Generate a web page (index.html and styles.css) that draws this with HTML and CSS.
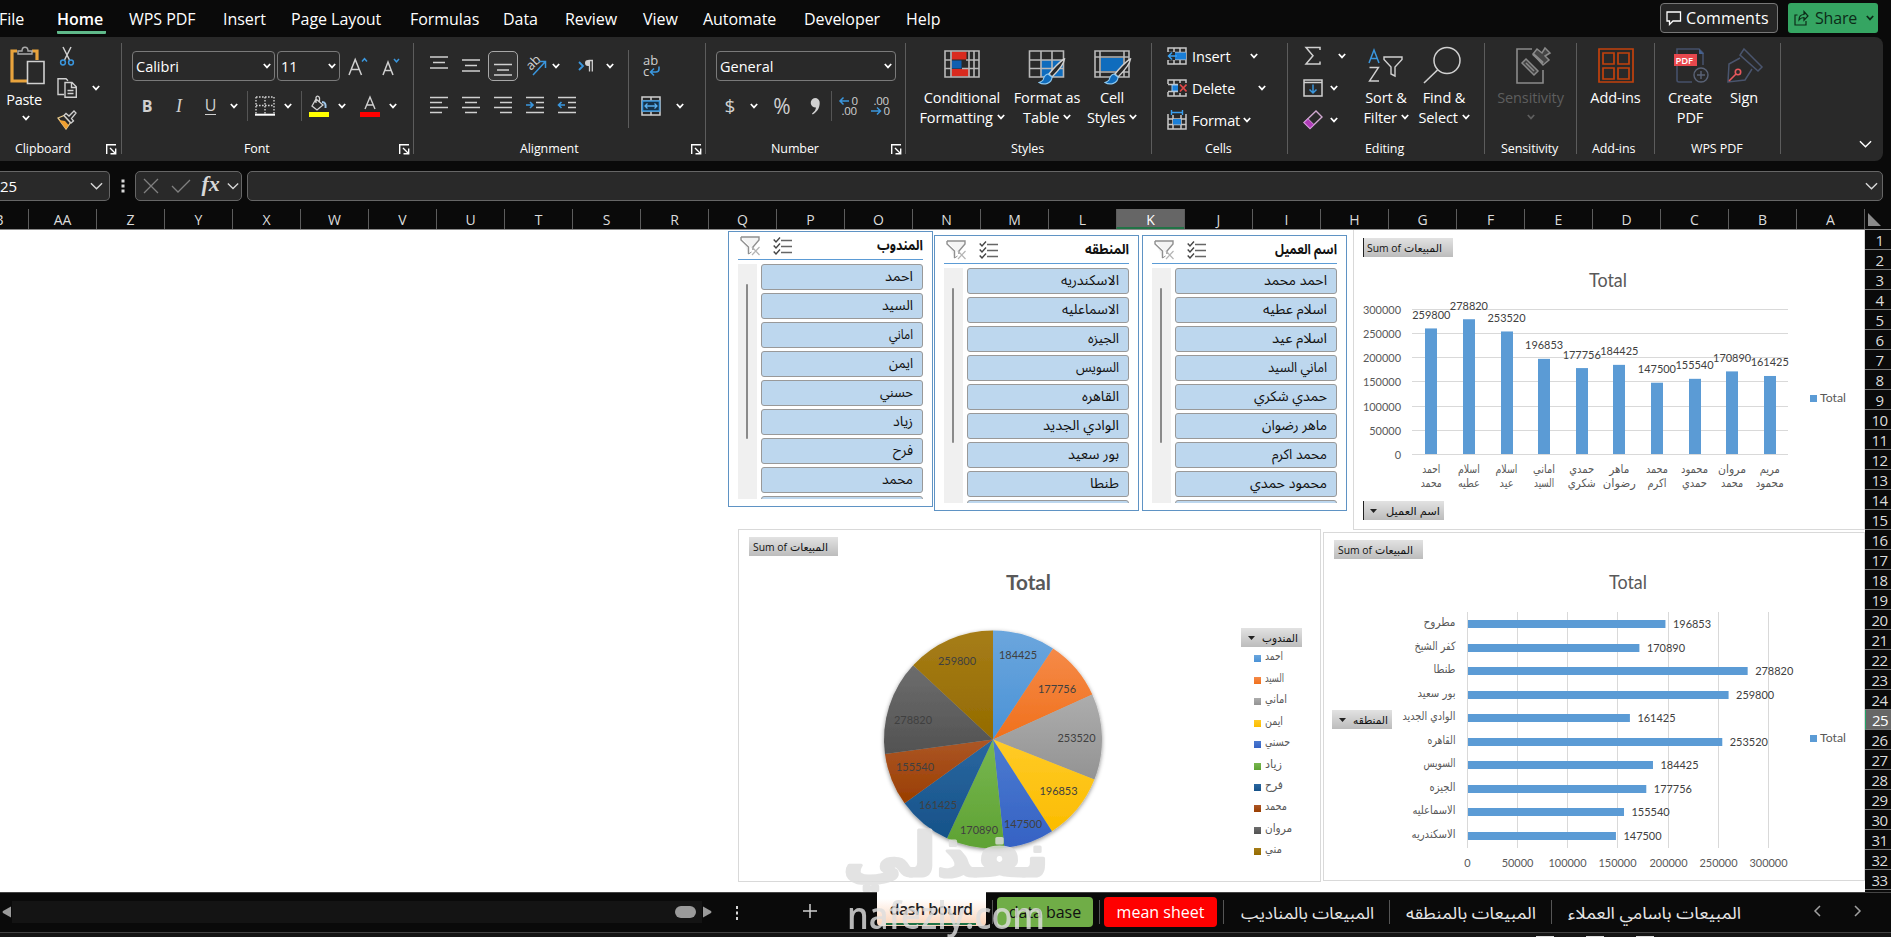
FILE: index.html
```html
<!DOCTYPE html>
<html lang="en">
<head>
<meta charset="utf-8">
<title>dash bourd</title>
<link rel="stylesheet" href="styles.css">
</head>
<body>
<svg class="defs" aria-hidden="true">
  <symbol id="chev" viewBox="0 0 8 6"><path d="M.8 1 4 4.4 7.2 1" fill="none" stroke="currentColor" stroke-width="1.7"/></symbol>
  <symbol id="chev-lg" viewBox="0 0 14 8"><path d="M1 1l6 6 6-6" fill="none" stroke="currentColor" stroke-width="1.5"/></symbol>
  <symbol id="launch" viewBox="0 0 11 11"><path d="M.7 10V.7H10M4 4l5 5M9.7 4.5v5.3H4.5" fill="none" stroke="currentColor" stroke-width="1.4"/></symbol>
  <symbol id="brush" viewBox="0 0 28 27"><path d="M26.5 1C22 3 14 12 11 16l3 3C18 15 26 6 26.500 1z" fill="#292929" stroke="#d0d0d0" stroke-width="1.400"/><path d="M10 16c-4 .5-4 4-5 6-1 1.500-2.500 2-4 2.500 5 3 13 1 13-5.500z" fill="#0f6cbd" stroke="#8cc8f0" stroke-width="1.200"/></symbol>
  <symbol id="clear-filter" viewBox="0 0 20 20"><path d="M1 1h18v3l-6 7v3M8.500 18V11L1 4V1" fill="#f4f4f4" stroke="#8f8f8f" stroke-width="1.400"/><path d="M8.500 18l3-2" stroke="#8f8f8f"/><path d="M12 11l7.500 8m0-8L12 19" stroke="#b4b4b4" stroke-width="1.200"/></symbol>
  <symbol id="multi" viewBox="0 0 19 18"><path d="M8 3.500h11M8 9.500h11M8 15.500h11" stroke="#666" stroke-width="1.500"/><path d="M.7 2.500l2.300 2.500 4-4.500M.7 8.500l2.300 2.500 4-4.500M.7 14.500l2.300 2.500 4-4.500" fill="none" stroke="#444" stroke-width="1.400"/></symbol>
</svg>

<nav class="menu">
  <span class="tab t-file">File</span><span class="tab t-home"><b>Home</b></span><span class="tab t-wps">WPS PDF</span><span class="tab t-insert">Insert</span><span class="tab t-page">Page Layout</span><span class="tab t-form">Formulas</span><span class="tab t-data">Data</span><span class="tab t-review">Review</span><span class="tab t-view">View</span><span class="tab t-auto">Automate</span><span class="tab t-dev">Developer</span><span class="tab">Help</span>
  <span class="menu-end">
    <button class="comments"><svg width="16" height="15" viewBox="0 0 16 15"><path d="M1 1h13.500v9H7l-3.500 3.500V10H1z" fill="none" stroke="#fff" stroke-width="1.300"/></svg>Comments</button>
    <button class="share"><svg width="15" height="16" viewBox="0 0 15 16"><path d="M3.500 5H1v10h11v-4M5 10c0-4 2-5.500 5-5.500V1.500L14 6l-4 4.200V7.500C8 7.500 6.500 8 5 10z" fill="none" stroke="#0c2b18" stroke-width="1.200"/></svg>Share<svg class="chev"><use href="#chev"/></svg></button>
  </span>
</nav>

<section class="ribbon">
  <div class="group g-clip">
    <div class="body clip">
      <div class="paste">
        <svg width="36" height="40" viewBox="0 0 36 40"><path d="M7 5H2v30h16M22 5h5v9" fill="none" stroke="#e8a33d" stroke-width="3.200"/><path d="M8 8V5h4c0-5 6-5 6 0h4v3z" fill="#292929" stroke="#aaa" stroke-width="1.400"/><path d="M17.500 15.500H34v22H17.500z" fill="#292929" stroke="#d0d0d0" stroke-width="1.600"/></svg>
        <span>Paste</span><svg class="chev"><use href="#chev"/></svg>
      </div>
      <div class="clip-tools">
        <svg width="20" height="20" viewBox="0 0 20 20"><path d="M6 1l6.500 13M14 1L7.500 14" stroke="#d0d0d0" stroke-width="1.500"/><circle cx="6" cy="16.500" r="2.400" fill="none" stroke="#3a96dd" stroke-width="1.500"/><circle cx="14" cy="16.500" r="2.400" fill="none" stroke="#3a96dd" stroke-width="1.500"/></svg><i></i>
        <svg width="20" height="20" viewBox="0 0 20 20"><path d="M7 16.500H1V.800h8l2 2" fill="none" stroke="#d0d0d0" stroke-width="1.400"/><path d="M8 4.500h7l4.300 4.300v10.400H8zM14.500 4.500v5h5M10.500 12.500h6M10.500 15.500h6" fill="none" stroke="#d0d0d0" stroke-width="1.400"/></svg><svg class="chev"><use href="#chev"/></svg>
        <svg width="20" height="20" viewBox="0 0 20 20"><path d="M1 8l6-2.500 6.500 7L9 19z" fill="#292929" stroke="#e8c98a" stroke-width="1.300"/><path d="M2 10l6 1 3.500 4L9 19z" fill="#f0a030"/><path d="M7 5.500l2-2 3 2.500L17 1l2 2-4.500 5.500 2 2.500-2.500 2z" fill="#292929" stroke="#d0d0d0" stroke-width="1.300"/></svg><i></i>
      </div>
    </div>
    <div class="label l-clip">Clipboard<svg class="launch"><use href="#launch"/></svg></div>
  </div>

  <div class="group g-font">
    <div class="body stack">
      <div class="row r-font1">
        <div class="combo">Calibri<svg class="chev"><use href="#chev"/></svg></div><i></i>
        <div class="combo">11<svg class="chev"><use href="#chev"/></svg></div>
        <svg width="20" height="20" viewBox="0 0 20 20"><path d="M1 19L7.200 3.500 13.500 19M3.300 13.500h8" fill="none" stroke="#d0d0d0" stroke-width="1.500"/><path d="M14 5.500l2.500-2.800L19 5.500" fill="none" stroke="#3a96dd" stroke-width="1.500"/></svg>
        <svg width="18" height="20" viewBox="0 0 18 20"><path d="M1 19L6 6l5 13M2.800 14.500h6.500" fill="none" stroke="#d0d0d0" stroke-width="1.500"/><path d="M12 3l2.500 2.800L17 3" fill="none" stroke="#3a96dd" stroke-width="1.500"/></svg>
      </div>
      <div class="row r-font2">
        <span class="gl bold">B</span><span class="gl ital">I</span><span class="gl under">U</span><svg class="chev"><use href="#chev"/></svg><i class="sep"></i>
        <svg width="20" height="20" viewBox="0 0 20 20"><path d="M1 1h18v17M1 1v17M10 1v17M1 9.500h18" fill="none" stroke="#d0d0d0" stroke-width="1.400" stroke-dasharray="1.600 1.400"/><path d="M0 18.700h20" stroke="#fff" stroke-width="2"/></svg>
        <svg class="chev"><use href="#chev"/></svg><i class="sep"></i>
        <svg width="20" height="22" viewBox="0 0 20 22"><path d="M7 4l7 6-6 5-5-4zM7 8V2.500C7.500.500 10 .500 10.500 3v4" fill="none" stroke="#d0d0d0" stroke-width="1.300"/><path d="M13 7c3 0 4 2 3.500 6" fill="none" stroke="#9fc6e8" stroke-width="2"/><path d="M0 17h20v5H0z" fill="#ff0"/></svg>
        <svg class="chev"><use href="#chev"/></svg>
        <svg width="20" height="22" viewBox="0 0 20 22"><path d="M5 14L10 2l5 12M6.800 10h6.500" fill="none" stroke="#d0d0d0" stroke-width="1.400"/><path d="M0 17h20v5H0z" fill="#f00"/></svg>
        <svg class="chev"><use href="#chev"/></svg>
      </div>
    </div>
    <div class="label l-font">Font<svg class="launch"><use href="#launch"/></svg></div>
  </div>

  <div class="group g-align">
    <div class="body align">
      <div class="stack">
        <div class="row r-al1">
          <svg class="ln" viewBox="0 0 20 20"><path d="M1 1h18M4 6.500h12M1 12h18"/></svg>
          <svg class="ln" viewBox="0 0 20 20"><path d="M1 4h18M4 9.500h12M1 15h18"/></svg>
          <span class="pressed"><svg class="ln" viewBox="0 0 20 20"><path d="M1 8.500h18M4 14h12M1 19h18"/></svg></span>
          <svg width="22" height="22" viewBox="0 0 22 22"><text class="ab" transform="translate(6 16) rotate(-45)">ab</text><path d="M8 20L20 7M14 6.500h6.500V13" fill="none" stroke="#3a96dd" stroke-width="1.500"/></svg>
          <svg class="chev"><use href="#chev"/></svg><i></i>
          <svg width="18" height="16" viewBox="0 0 18 16"><path d="M2 4l4 4-4 4" fill="none" stroke="#3a96dd" stroke-width="1.800"/><path d="M16 2.500h-4.500M12.500 2.500v11M15.300 2.500v11" stroke="#d0d0d0" stroke-width="1.300"/><path d="M12.500 2H11a3 3 0 0 0 0 6h1.500z" fill="#d0d0d0"/></svg>
          <svg class="chev"><use href="#chev"/></svg>
        </div>
        <div class="row r-al2">
          <svg class="ln" viewBox="0 0 20 20"><path d="M1 1.500h18M1 6.500h12M1 11.500h18M1 16.500h12"/></svg>
          <svg class="ln" viewBox="0 0 20 20"><path d="M1 1.500h18M4 6.500h12M1 11.500h18M4 16.500h12"/></svg>
          <svg class="ln" viewBox="0 0 20 20"><path d="M1 1.500h18M7 6.500h12M1 11.500h18M7 16.500h12"/></svg>
          <svg class="ln" viewBox="0 0 20 20"><path d="M1 1.500h18M11 6.500h8M11 11.500h8M1 16.500h18"/><path class="bl" d="M1 9h7M5 6l3 3-3 3"/></svg>
          <svg class="ln" viewBox="0 0 20 20"><path d="M1 1.500h18M11 6.500h8M11 11.500h8M1 16.500h18"/><path class="bl" d="M8 9H1.500M4.500 6l-3 3 3 3"/></svg>
        </div>
      </div>
      <i class="vsep"></i>
      <div class="wrap">
        <svg width="20" height="22" viewBox="0 0 20 22"><text class="ab2" x="2" y="10">ab</text><text class="ab2" x="2" y="20.500">c</text><path d="M18 11.500v2.500a3 3 0 0 1-3 3h-5M13 13.500L9.500 17l3.500 3.500" fill="none" stroke="#3a96dd" stroke-width="1.600"/></svg><i></i>
        <svg width="20" height="20" viewBox="0 0 20 20"><path d="M1 1h18v18H1zM1 5h18M1 15h18M10 1v4M10 15v4" fill="none" stroke="#d0d0d0" stroke-width="1.500"/><path d="M1.500 5h17v10h-17z" fill="#16324a" stroke="#3a96dd" stroke-width="1.500"/><path d="M4 10h12M6.500 7.500L4 10l2.500 2.500M13.500 7.500L16 10l-2.500 2.500" fill="none" stroke="#5ab0f0" stroke-width="1.300"/></svg>
        <svg class="chev"><use href="#chev"/></svg>
      </div>
    </div>
    <div class="label l-align">Alignment<svg class="launch"><use href="#launch"/></svg></div>
  </div>

  <div class="group g-num">
    <div class="body stack">
      <div class="row r-num1"><div class="combo">General<svg class="chev"><use href="#chev"/></svg></div></div>
      <div class="row r-num2">
        <span class="gl dollar">$</span><svg class="chev"><use href="#chev"/></svg><span class="gl pct">%</span>
        <svg width="10" height="17" viewBox="0 0 10 17"><path d="M5 0a4.700 4.700 0 0 1 4.700 5c0 5-2.500 9-7 11.500l-.7-1c2.500-1.800 3.800-3.800 4-6A4.700 4.700 0 1 1 5 0z" fill="#d0d0d0"/></svg><i class="sep"></i>
        <svg width="20" height="22" viewBox="0 0 20 22"><text class="dec" x="12.500" y="10">0</text><text class="dec" x="2.500" y="20">.00</text><path d="M10 6H1M4.500 2.500L1 6l3.500 3.500" fill="none" stroke="#3a96dd" stroke-width="1.500"/></svg>
        <svg width="20" height="22" viewBox="0 0 20 22"><text class="dec" x="2.500" y="10">.00</text><text class="dec" x="12.500" y="20">0</text><path d="M0 16h9.500M6 12.500L9.500 16 6 19.500" fill="none" stroke="#3a96dd" stroke-width="1.500"/></svg>
      </div>
    </div>
    <div class="label l-num">Number<svg class="launch"><use href="#launch"/></svg></div>
  </div>

  <div class="group g-styles">
    <div class="body big r-styles">
      <div class="tool"><svg width="40" height="38" viewBox="0 0 40 38"><path d="M9.500 5.500h15v8h-15zM9.500 23h18v7.500h-18z" fill="#d92b1f"/><path d="M9.500 14.500h10v8h-10z" fill="#0f5fb0"/><path d="M3 5h34v26H3zM3 14h6M24 14h13M3 22.500h6M20 22.500h17M9 5v26M27 5v26M32 5v26" fill="none" stroke="#b8b8b8" stroke-width="1.600"/></svg><span>Conditional</span><span>Formatting <svg class="chev"><use href="#chev"/></svg></span></div>
      <div class="tool"><svg width="40" height="38" viewBox="0 0 40 38"><path d="M14 14h22v17H14z" fill="#0f6cbd"/><path d="M2.500 5h34v26h-34zM2.500 14h34M2.500 22.500h34M14 5v26M25 5v26" fill="none" stroke="#b8b8b8" stroke-width="1.600"/><use href="#brush" x="11" y="12" width="28" height="27"/></svg><span>Format as</span><span>Table <svg class="chev"><use href="#chev"/></svg></span></div>
      <div class="tool"><svg width="40" height="38" viewBox="0 0 40 38"><path d="M3 5h34v26H3zM3 11h34M3 26h34M8 5v26M32 5v26" fill="none" stroke="#b8b8b8" stroke-width="1.600"/><path d="M9 12h22v13H9z" fill="#0f6cbd"/><use href="#brush" x="12" y="12" width="28" height="27"/></svg><span>Cell</span><span>Styles <svg class="chev"><use href="#chev"/></svg></span></div>
    </div>
    <div class="label l-styles">Styles</div>
  </div>

  <div class="group g-cells">
    <div class="body cells">
      <div class="line"><svg width="20" height="18" viewBox="0 0 20 18"><path d="M1 1h18v16H1zM1 5.500h18M1 12.500h18M7 1v16M13 1v16" fill="none" stroke="#c8c8c8" stroke-width="1.500"/><path d="M8 5.500h11v7H8z" fill="#1a7fd8"/><path d="M0 5h8v8H0z" fill="#292929"/><path d="M10 9H1.500M5 5.500L1.500 9 5 12.500" fill="none" stroke="#3aa0f0" stroke-width="1.500"/></svg><span class="c-ins">Insert</span><svg class="chev"><use href="#chev"/></svg></div>
      <div class="line"><svg width="20" height="18" viewBox="0 0 20 18"><path d="M1 5V1h18v4M1 13v4h18v-4M7 1v4M13 1v4M7 13v4M13 13v4M1 5.500h18M1 12.500h18" fill="none" stroke="#c8c8c8" stroke-width="1.500"/><path d="M5 6h7v6H5z" fill="#1a7fd8" stroke="#9cc8ee"/><path d="M11 4h9v10h-9z" fill="#292929"/><path d="M13 5.500l6.500 7m0-7l-6.500 7" stroke="#e04848" stroke-width="1.700"/></svg><span class="c-del">Delete</span><svg class="chev"><use href="#chev"/></svg></div>
      <div class="line"><svg width="20" height="20" viewBox="0 0 20 20"><path d="M1 4v15h18V4M1 9h18M1 14.500h18M6 5v14M14 5v14" fill="none" stroke="#c8c8c8" stroke-width="1.500"/><path d="M6 9h8v5.500H6z" fill="#1a7fd8"/><path d="M4.500 2.500h11M4.500 0v5M15.500 0v5" stroke="#3aa0f0" stroke-width="1.400"/></svg><span class="c-for">Format</span><svg class="chev"><use href="#chev"/></svg></div>
    </div>
    <div class="label l-cells">Cells</div>
  </div>

  <div class="group g-edit">
    <div class="body edit">
      <div class="edit-col">
        <div class="line e1"><svg width="20" height="20" viewBox="0 0 20 20"><path d="M17 4V1.500H3l7 8.300L3 18h14v-2.500" fill="none" stroke="#d0d0d0" stroke-width="1.500"/></svg><svg class="chev"><use href="#chev"/></svg></div>
        <div class="line"><svg width="20" height="18" viewBox="0 0 20 18"><path d="M1 1h18v16H1zM1 3.500h18" fill="none" stroke="#d0d0d0" stroke-width="1.500"/><path d="M10 5.500v8.500M6.500 10.500L10 14l3.500-3.500" fill="none" stroke="#3a96dd" stroke-width="1.500"/></svg><svg class="chev"><use href="#chev"/></svg></div>
        <div class="line"><svg width="20" height="20" viewBox="0 0 20 20"><path d="M1 12.500L13 1l6 6L7 18.500z" fill="none" stroke="#d0a8d0" stroke-width="1.400"/><path d="M1 12.500L5 8.700l6 6L7 18.500z" fill="#b03bb8" stroke="#d79be0"/></svg><svg class="chev"><use href="#chev"/></svg></div>
      </div>
      <div class="big r-edit">
        <div class="tool"><svg width="40" height="38" viewBox="0 0 40 38"><path d="M3 17L8 4l5 13M4.800 12.500h6.500" fill="none" stroke="#3a96dd" stroke-width="1.500"/><path d="M3.500 21.500h9L3.500 35h9.500" fill="none" stroke="#d0d0d0" stroke-width="1.400"/><path d="M18 11h18v2.500l-7 7.500v9l-4-2V21l-7-7.500z" fill="none" stroke="#d0d0d0" stroke-width="1.400"/></svg><span>Sort &amp;</span><span>Filter <svg class="chev"><use href="#chev"/></svg></span></div>
        <div class="tool find"><svg width="40" height="38" viewBox="0 0 40 38"><circle cx="25" cy="14.500" r="13" fill="none" stroke="#d0d0d0" stroke-width="1.500"/><path d="M15.500 24L2 37" stroke="#d0d0d0" stroke-width="1.600"/></svg><span>Find &amp;</span><span>Select <svg class="chev"><use href="#chev"/></svg></span></div>
      </div>
    </div>
    <div class="label l-edit">Editing</div>
  </div>

  <div class="group g-sens">
    <div class="body big one">
      <div class="tool dim"><svg width="40" height="38" viewBox="0 0 40 38"><path d="M21 3H6v34h26V24" fill="none" stroke="#8a8a8a" stroke-width="1.600"/><path d="M11 17l4-4 12 12-4 4zM15 17l8 8M22 8l4-5 5 4 3-5 5 5-5 3 4 4-6 5z" fill="#444" stroke="#8a8a8a" stroke-width="1.500"/><path d="M22 8l10 9" stroke="#8a8a8a" stroke-width="2.500"/></svg><span>Sensitivity</span><span><svg class="chev"><use href="#chev"/></svg></span></div>
    </div>
    <div class="label l-sens">Sensitivity</div>
  </div>

  <div class="group g-add">
    <div class="body big one">
      <div class="tool"><svg width="40" height="38" viewBox="0 0 40 38"><g fill="none" stroke="#c2410c" stroke-width="1.700"><path d="M3 3h34v33H3z"/><path d="M7 7h11v11H7zM22 7h11v11H22zM7 22h11v11H7zM22 22h11v11H22z"/></g></svg><span>Add-ins</span></div>
    </div>
    <div class="label l-add">Add-ins</div>
  </div>

  <div class="group g-wps">
    <div class="body big r-wps">
      <div class="tool"><svg width="40" height="38" viewBox="0 0 40 38"><path d="M7 8V3h22l4 4v12M7 20v14a2 2 0 0 0 2 2h13" fill="none" stroke="#45506a" stroke-width="1.600"/><path d="M29 3v5h5" fill="#45618f"/><path d="M4 8h23v12H4z" fill="#e8484d"/><text class="pdf" x="5.500" y="17.500">PDF</text><circle cx="31" cy="29" r="7" fill="none" stroke="#5a6377" stroke-width="1.400"/><path d="M31 25v8M27 29h8" stroke="#5a6377" stroke-width="1.400"/></svg><span>Create</span><span>PDF</span></div>
      <div class="tool"><svg width="40" height="38" viewBox="0 0 40 38"><path d="M20 3l18 18-4 4L16 9zM16 12L5 18 4 36l17-2 7-11" fill="none" stroke="#4a556e" stroke-width="1.500"/><circle cx="14" cy="26" r="2.700" fill="none" stroke="#e8585d" stroke-width="1.600"/><path d="M12 28l-7 7" stroke="#e8585d" stroke-width="1.600"/></svg><span>Sign</span></div>
    </div>
    <div class="label l-wps">WPS PDF</div>
  </div>
  <svg class="collapse"><use href="#chev-lg"/></svg>
</section>

<section class="formula">
  <div class="namebox">25<svg class="chev-lg"><use href="#chev-lg"/></svg></div>
  <svg class="dots" viewBox="0 0 4 14"><path d="M.500.500h3v3h-3zM.500 5.500h3v3h-3zM.500 10.500h3v3h-3z" fill="#d8d8d8"/></svg>
  <div class="fx">
    <svg width="16" height="16" viewBox="0 0 16 16"><path d="M1 1l14 14M15 1L1 15" stroke="#808080" stroke-width="1.300"/></svg>
    <svg width="20" height="14" viewBox="0 0 20 14"><path d="M1 7l6 6L19 1" fill="none" stroke="#808080" stroke-width="1.300"/></svg>
    <span>fx</span><svg class="chev-lg small"><use href="#chev-lg"/></svg>
  </div>
  <div class="input"><svg class="chev-lg"><use href="#chev-lg"/></svg></div>
</section>

<div class="cols"><div class="corner"></div></div>

<main class="sheet">
  <div class="canvas" id="canvas"></div>
  <div class="rows" id="rows"></div>
</main>

<footer class="tabs">
  <div class="scroll">
    <svg width="10" height="12" viewBox="0 0 10 12"><path d="M9 .500v11L1 7Q0 6 1 5z" fill="#9a9a9a"/></svg>
    <i class="track"><i class="thumb"></i></i>
    <svg width="10" height="12" viewBox="0 0 10 12"><path d="M1 .500v11L9 7Q10 6 9 5z" fill="#9a9a9a"/></svg>
  </div>
  <svg class="dots" viewBox="0 0 4 14"><path d="M1 0h2v3H1zM1 5.500h2v3H1zM1 11h2v3H1z" fill="#d8d8d8"/></svg>
  <svg class="plus" viewBox="0 0 14 14"><path d="M7 0v14M0 7h14" stroke="#d0d0d0" stroke-width="1.500"/></svg>
  <div class="stab active"><span>dash bourd</span></div><i class="tabsep"></i>
  <div class="stab green">data base</div><i class="tabsep"></i>
  <div class="stab red">mean sheet</div><i class="tabsep"></i>
  <div class="stab plain p1"><svg class="artext" width="134" height="34"><text x="134" y="22" textLength="133" lengthAdjust="spacingAndGlyphs">المبيعات بالمناديب</text></svg></div><i class="tabsep"></i>
  <div class="stab plain p2"><svg class="artext" width="132" height="34"><text x="132" y="22" textLength="130" lengthAdjust="spacingAndGlyphs">المبيعات بالمنطقه</text></svg></div><i class="tabsep"></i>
  <div class="stab plain p3"><svg class="artext" width="175" height="34"><text x="175" y="22" textLength="173" lengthAdjust="spacingAndGlyphs">المبيعات باسامي العملاء</text></svg></div>
  <svg class="nav n1" viewBox="0 0 8 12"><path d="M7 1L2 6l5 5" fill="none" stroke="#a0a0a0" stroke-width="1.500"/></svg>
  <svg class="nav n2" viewBox="0 0 8 12"><path d="M1 1l5 5-5 5" fill="none" stroke="#a0a0a0" stroke-width="1.500"/></svg>
</footer>
<div class="status"><i></i><i></i><i></i></div>

<svg class="mark" viewBox="835 815 220 122">
  <text class="mark-ar" x="1049" y="876" textLength="206" lengthAdjust="spacingAndGlyphs">نفذلي</text>
  <text class="mark-en" x="847" y="929" textLength="198" lengthAdjust="spacingAndGlyphs">nafezly.com</text>
</svg>
<script src="script.js"></script>
</body>
</html>
```

FILE: styles.css
```css
* { box-sizing: border-box; }
html, body { margin: 0; height: 100%; }
body { width: 1891px; height: 937px; overflow: hidden; background: #0a0a0a; color: #fff; font-family: "Open Sans", "Noto Sans", "DejaVu Sans", sans-serif; display: flex; flex-direction: column; position: relative; }
i { font-style: normal; display: block; }
svg { display: block; flex: none; }
button { font: inherit; padding: 0; }
.defs { position: absolute; width: 0; height: 0; }
.chev { width: 8px; height: 6px; color: #fff; }
.chev-lg { width: 13px; height: 8px; color: #d8d8d8; }

/* menu */
.menu { height: 37px; flex: none; display: flex; font-size: 16px; line-height: 22px; padding-top: 8px; white-space: nowrap; }
.tab { flex: none; letter-spacing: -.05px; }
.t-file { margin-left: -1px; }
.tab b { display: inline-block; font-weight: 600; border-bottom: 3px solid #5fb98a; height: 26px; width: 49px; border-radius: 1px; }
.t-file { width: 58px; } .t-home { width: 72px; } .t-wps { width: 94px; } .t-insert { width: 68px; } .t-page { width: 119px; } .t-form { width: 93px; } .t-data { width: 62px; } .t-review { width: 78px; } .t-view { width: 60px; } .t-auto { width: 101px; } .t-dev { width: 102px; }
.menu-end { margin: -5px 13px 0 auto; display: flex; gap: 10px; }
.comments { width: 118px; height: 30px; border: 1px solid #777; border-radius: 4px; background: #262626; color: #fff; display: flex; align-items: center; gap: 4px; padding-left: 5px; letter-spacing: .15px; }
.share { width: 90px; height: 30px; border: 0; border-radius: 3px; background: #35a562; color: #0c2b18; display: flex; align-items: center; gap: 6px; padding-left: 6px; letter-spacing: -.2px; }
.share .chev { color: #0c2b18; margin-left: 3px; }

/* ribbon */
.ribbon { flex: none; width: 1883px; height: 124px; background: #292929; border-radius: 0 8px 8px 0; padding: 6px 0 7px; display: flex; }
.group { border-right: 1px solid #5c5c5c; display: flex; flex-direction: column; flex: none; }
.g-clip { width: 122px; } .g-font { width: 292px; } .g-align { width: 292px; } .g-num { width: 200px; } .g-styles { width: 246px; } .g-cells { width: 136px; } .g-edit { width: 197px; } .g-sens { width: 92px; } .g-add { width: 78px; } .g-wps { width: 126px; }
.body { height: 96px; flex: none; }
.label { height: 18px; margin-top: 1px; font-size: 12.500px; line-height: 18px; display: flex; justify-content: space-between; letter-spacing: -.1px; }
.launch { width: 11px; height: 11px; margin-top: 4px; }
.l-clip { padding: 0 4px 0 15px; } .l-font { padding: 0 3px 0 122px; } .l-align { padding: 0 3px 0 106px; } .l-num { padding: 0 3px 0 65px; }
.l-styles { padding-left: 105px; } .l-cells { padding-left: 53px; } .l-edit { padding-left: 77px; } .l-sens { padding-left: 16px; } .l-add { padding-left: 15px; } .l-wps { padding-left: 36px; }
.clip { display: flex; }
.paste { width: 49px; padding: 3px 0 0 2px; display: flex; flex-direction: column; align-items: center; font-size: 14.500px; line-height: 22px; letter-spacing: -.3px; }
.paste span { margin: 3px 3px 4px 0; }
.paste > svg:first-child { margin-left: 5px; }
.clip-tools { padding: 3px 0 0 8px; display: grid; grid-template-columns: 20px 38px; grid-template-rows: 20px 20px 20px; row-gap: 12px; align-items: center; justify-items: center; }
.stack { display: flex; flex-direction: column; gap: 10px; padding-top: 8px; }
.row { display: grid; height: 30px; align-items: center; justify-items: center; }
.row svg, .wrap svg { overflow: visible; }
.combo { width: 100%; height: 30px; border: 1px solid #7a7a7a; border-radius: 4px; display: flex; align-items: center; justify-content: space-between; padding: 0 3px 0 3px; font-size: 14.500px; }
.sep { width: 1px; height: 30px; background: #555; }
.r-font1 { padding-left: 10px; grid-template-columns: 143px 2px 63px 36px 30px; }
.r-font2 { padding-left: 9px; grid-template-columns: 32px 32px 31px 16px 10px 25px 22px 5px 30px 16px 40px 6px; }
.gl { color: #d0d0d0; font-size: 16px; line-height: 20px; }
.bold { font-weight: 700; } .ital { font-family: "Liberation Serif", serif; font-style: italic; font-size: 18px; } .under { border-bottom: 1.500px solid #d0d0d0; line-height: 17px; }
.align { display: flex; }
.r-al1 { padding-left: 9px; grid-template-columns: 32px 32px 32px 33px 8px 6px 40px 8px; }
.r-al2 { padding-left: 9px; grid-template-columns: repeat(5, 32px); }
.ln { width: 20px; height: 20px; fill: none; stroke: #d0d0d0; stroke-width: 1.600; }
.ln .bl { stroke: #3a96dd; }
.pressed { width: 30px; height: 30px; border: 1px solid #a8a8a8; border-radius: 5px; background: #333; display: grid; place-items: center; }
.ab { font-size: 13px; fill: #d0d0d0; } .ab2 { font-size: 13px; fill: #d0d0d0; } .dec { font-size: 11.500px; fill: #d0d0d0; letter-spacing: -.3px; }
.pdf { font-size: 9.500px; fill: #fff; font-weight: 600; }
.vsep { width: 1px; height: 78px; background: #5c5c5c; margin: 7px 0 0 14px; }
.wrap { display: grid; grid-template-columns: 27px 32px; grid-template-rows: 30px 30px; row-gap: 10px; padding: 8px 0 0 8px; height: 78px; align-items: center; justify-items: center; }
.r-num1 { padding-left: 10px; grid-template-columns: 180px; }
.r-num2 { padding-left: 10px; grid-template-columns: 28px 20px 36px 29px 5px 29px 35px; }
.dollar { font-size: 19px; } .pct { font-size: 21px; }
.big { display: flex; font-size: 14.500px; line-height: 20px; }
.tool { display: flex; flex-direction: column; align-items: center; white-space: nowrap; padding-top: 3px; letter-spacing: -.1px; }
.tool > svg { margin-bottom: 4px; overflow: visible; }
.tool span .chev { display: inline-block; margin-bottom: 3px; }
.tool span { height: 20px; }
.r-styles { padding-left: 10px; } .r-styles .tool:nth-child(1) { width: 92px; } .r-styles .tool:nth-child(2) { width: 78px; } .r-styles .tool:nth-child(3) { width: 52px; }
.one { justify-content: center; }
.dim, .dim .chev { color: #5e5e5e; }
.cells { padding: 3px 0 0 15px; font-size: 14.500px; display: flex; flex-direction: column; gap: 12px; }
.line { display: flex; align-items: center; height: 20px; }
.cells .line span { margin-left: 5px; letter-spacing: -.1px; }
.c-ins { width: 58px; } .c-del { width: 66px; } .c-for { width: 51px; }
.edit { display: flex; }
.edit-col { padding: 3px 0 0 15px; width: 66px; display: flex; flex-direction: column; gap: 12px; }
.edit-col .line { gap: 7px; } .edit-col .e1 { gap: 15px; }
.r-edit .tool { width: 64px; }
.r-edit .find { width: 58px; margin-left: -3px; }
.find > svg { margin-left: -4px; }
.r-wps { padding-left: 5px; } .r-wps .tool:first-child { width: 60px; } .r-wps .tool:last-child { width: 48px; }
.collapse { width: 13px; height: 8px; margin: 97px 0 0 78px; }

/* formula bar */
.formula { height: 45px; flex: none; padding-top: 10px; display: flex; }
.formula > div { height: 30px; background: #292929; border: 1px solid #666; border-radius: 5px; display: flex; align-items: center; }
.formula .namebox { width: 110px; border-left: 0; border-radius: 0 5px 5px 0; justify-content: space-between; padding: 0 6px 0 0; font-size: 15px; }
.formula .dots { width: 4px; height: 14px; margin: 8px 10px 0 10.500px; }
.fx { width: 107px; gap: 12px; padding-left: 7px; }
.fx span { font: italic 700 22px/24px "Liberation Serif", serif; color: #d8d8d8; margin: -5px -4px 0 -1px; }
.fx .small { width: 12px; margin-left: -1px; }
.formula .input { width: 1636px; margin-left: 5px; justify-content: flex-end; padding-right: 4px; }

/* headers */
.cols { height: 24px; flex: none; padding: 3px 0 0; display: flex; flex-direction: row-reverse; justify-content: flex-start; border-bottom: 1px solid #8a8a8a; overflow: hidden; font-size: 14px; line-height: 22px; color: #dcdcdc; }
.cols span { width: 68px; flex: none; text-align: center; border-left: 1px solid #5c5c5c; height: 20px; }
.cols .sel { background: #666; border-bottom: 2px solid #217346; color: #fff; }
.corner { width: 27px; flex: none; border-left: 1px solid #5c5c5c; height: 20px; }
.corner::after { content: ""; display: block; width: 13px; height: 13px; margin: 4px 0 0 3px; background: #8a8a8a; clip-path: polygon(0 0, 100% 100%, 0 100%); }
.sheet { height: 662px; flex: none; display: flex; }
.canvas { width: 1865px; background: #fff; position: relative; overflow: hidden; }
.rows { width: 26px; font-size: 15px; line-height: 20px; color: #dcdcdc; overflow: hidden; }
.rows div { height: 20px; border-bottom: 1px solid #777; text-align: center; padding-left: 3px; letter-spacing: -.6px; }
.rows .sel { background: #666; border-left: 1px solid #21a366; color: #fff; }

/* slicers */
.slicer { position: absolute; width: 205px; height: 276px; border: 1px solid #5f93c4; background: #fff; padding: 4px 9px 0; }
.slicer header { display: flex; align-items: flex-start; height: 24px; border-bottom: 1px solid #5b9bd5; }
.slicer header .icon-f { width: 20px; height: 20px; margin-left: 2px; }
.slicer header .icon-m { width: 19px; height: 18px; margin-left: 13px; margin-top: 1px; }
.slicer header .ttl { margin-left: auto; }
.slicer .list { display: flex; margin-top: 4px; height: 235px; justify-content: space-between; overflow: hidden; }
.slicer .rail { width: 19px; background: #f0f0f0; padding: 20px 0 0 8px; }
.slicer .rail i { width: 2px; height: 155px; background: #8a8a8a; border-radius: 1px; }
.slicer .items { width: 162px; display: flex; flex-direction: column; gap: 3px; }
.slicer .items div { height: 26px; flex: none; background: #bdd7ee; border: 1px solid #999; border-radius: 3px; padding-right: 9px; display: flex; justify-content: flex-end; }
.ar { direction: rtl; fill: #111; font-size: 14px; font-family: "Noto Sans Arabic", "Noto Naskh Arabic", "DejaVu Sans", sans-serif; }
.ar.b { font-weight: 700; }

/* charts */
.chart { position: absolute; display: block; font-family: Lato, "DejaVu Sans", sans-serif; font-size: 11.500px; }
.chart .frame { fill: #fff; stroke: #d9d9d9; }
.chart .grid { stroke: #d9d9d9; stroke-width: 1; }
.chart .series { fill: #5b9bd5; }
.chart .val { fill: #404040; }
.chart .axis { fill: #595959; }
.chart .title { fill: #595959; font-size: 18.500px; }
.chart .title.b { font-weight: 700; font-size: 20.500px; }
.chart .cat { fill: #595959; font-family: "DejaVu Sans", sans-serif; font-size: 11.500px; }
.chart .btn { fill: url(#btn); }
.chart .btn-t { fill: #111; font-family: "Open Sans", "DejaVu Sans", sans-serif; font-size: 11px; }

/* sheet tabs */
.tabs { height: 41px; flex: none; border-top: 1px solid #444; border-bottom: 1px solid #444; display: flex; }
.scroll { display: flex; width: 712px; padding: 13px 0 0 2px; }
.track { width: 690px; height: 22px; margin-top: -5px; background: #141414; padding: 5px 0 0 663px; }
.thumb { width: 21px; height: 12px; border-radius: 6px; background: #9a9a9a; }
.tabs .dots { width: 4px; height: 14px; margin: 13px 0 0 23px; }
.plus { width: 14px; height: 14px; margin: 11px 0 0 64px; }
.stab { flex: none; height: 30px; margin-top: 4px; font-size: 16px; line-height: 31px; border-radius: 4px; text-align: center; white-space: nowrap; }
.active { width: 109px; height: 34px; margin: -1px 0 0 60px; padding: 7px 10px 0 9px; background: linear-gradient(#fff 20%, #fbd3b8); color: #222; font-weight: 600; border-radius: 0 0 4px 4px; letter-spacing: -.5px; }
.active span { display: block; height: 26px; line-height: 20px; border-bottom: 2px solid #217346; }
.green { width: 96px; background: #70ad47; color: #111; margin-left: 4px; letter-spacing: -.05px; }
.red { width: 113px; background: #f00; margin-left: 4px; letter-spacing: 0; }
.tabsep { width: 1px; height: 24px; background: #555; margin: 7px 0 0 6px; flex: none; }
.artext { overflow: visible; }
.artext text { direction: rtl; fill: #e8e8e8; font-size: 16.500px; font-family: "Noto Sans Arabic", "DejaVu Sans", sans-serif; }
.plain { margin-top: 4px; }
.p1 { margin-left: 16px; margin-right: 9px; } .p2 { margin-left: 14px; margin-right: 9px; } .p3 { margin-left: 14px; }
.nav { width: 8px; height: 12px; margin-top: 12px; }
.n1 { margin-left: 72px; } .n2 { margin-left: 33px; }
.status { height: 4px; flex: none; background: #151515; display: flex; gap: 32px; padding: 3px 0 0 1536px; }
.status i { width: 18px; height: 1px; background: #ddd; }

.mark { position: absolute; left: 835px; top: 815px; width: 220px; height: 122px; overflow: visible; opacity: .82; fill: #dedede; }
.mark-ar { direction: rtl; font: 700 60px "DejaVu Sans", sans-serif; stroke: #dedede; stroke-width: 3px; stroke-linejoin: round; }
.mark-en { font: 600 37px "Open Sans", sans-serif; }
```

FILE: script.js
```js
const names = [...'ABCDEFGHIJKLMNOPQRSTUVWXYZ', 'AA', 'AB'];
document.querySelector('.cols').insertAdjacentHTML('beforeend',
  names.map(n => `<span${n === 'K' ? ' class="sel"' : ''}>${n}</span>`).join(''));
document.getElementById('rows').innerHTML =
  Array.from({ length: 34 }, (_, i) => `<div${i === 24 ? ' class="sel"' : ''}>${i < 33 ? i + 1 : ''}</div>`).join('');

const TOP = 230;
const canvas = document.getElementById('canvas');
const add = html => canvas.insertAdjacentHTML('beforeend', html);

// Slicers: title, title width, left, top, [caption, width of caption]
const slicers = [
  ['المندوب', 46, 728, 231, [['احمد', 28], ['السيد', 31], ['اماني', 24], ['ايمن', 24], ['حسني', 33], ['زياد', 20], ['فرح', 20], ['محمد', 31]]],
  ['المنطقه', 44, 934, 235, [['الاسكندريه', 58], ['الاسماعليه', 57], ['الجيزه', 31], ['السويس', 43], ['القاهره', 37], ['الوادي الجديد', 76], ['بور سعيد', 51], ['طنطا', 29]]],
  ['اسم العميل', 62, 1142, 235, [['احمد محمد', 63], ['اسلام عطيه', 64], ['اسلام عيد', 55], ['اماني السيد', 59], ['حمدي شكري', 73], ['ماهر رضوان', 65], ['محمد اكرم', 55], ['محمود حمدي', 77]]]
];
const ar = (t, w, h, cls, y) =>
  `<svg class="ttl" width="${w}" height="${h}" overflow="visible"><text class="ar ${cls}" x="${w}" y="${y}" textLength="${w}" lengthAdjust="spacingAndGlyphs">${t}</text></svg>`;
for (const [t, tw, x, y, list] of slicers) {
  add(`<section class="slicer" style="left:${x}px;top:${y - TOP}px"><header><svg class="icon-f"><use href="#clear-filter"/></svg><svg class="icon-m"><use href="#multi"/></svg>${ar(t, tw, 20, 'b', 14)}</header>
  <div class="list"><div class="rail"><i></i></div><div class="items">${list.map(([n, w]) => `<div>${ar(n, w, 24, '', 16)}</div>`).join('')}<div></div></div></div></section>`);
}

const T = (x, y, s, cls, anchor = 'middle', len) =>
  `<text x="${x}" y="${y}" class="${cls}" text-anchor="${anchor}"${len ? ` textLength="${len}" lengthAdjust="spacingAndGlyphs"` : ''}>${s}</text>`;
const open = (x, y, w, h) =>
  `<svg class="chart" style="left:${x}px;top:${y - TOP}px" width="${w}" height="${h}" viewBox="${x} ${y} ${w} ${h}"><rect class="frame" x="${x + .5}" y="${y + .5}" width="${w - 1}" height="${h - 1}"/>`;
const sumBtn = (x, y, w) =>
  `<rect class="btn" x="${x}" y="${y}" width="${w}" height="19"/>` + T(x + 4, y + 13.5, 'Sum of', 'btn-t', 'start', 34) + T(x + 79, y + 13.5, 'المبيعات', 'btn-t', 'end', 38);
const fieldBtn = (x, y, w, t, len) =>
  `<rect class="btn" x="${x}" y="${y}" width="${w}" height="19"/><path d="M${x + 7} ${y + 8}h7l-3.500 4z" fill="#222"/>` + T(x + w - 4, y + 13.5, t, 'btn-t', 'end', len);
const num = (x, y, v, cls, a) => T(x, y, v, cls, a, String(v).length * 6.35);

// Column chart
const sales = [['احمد', 'محمد', 259800], ['اسلام', 'عطيه', 278820], ['اسلام', 'عيد', 253520], ['اماني', 'السيد', 196853], ['حمدي', 'شكري', 177756], ['ماهر', 'رضوان', 184425], ['محمد', 'اكرم', 147500], ['محمود', 'حمدي', 155540], ['مروان', 'محمد', 170890], ['مريم', 'محمود', 161425]];
const catW = [[18, 21], [22, 22], [22, 14], [22, 20], [25, 28], [20, 33], [22, 19], [27, 25], [28, 22], [20, 28]];
let s = open(1353, 229, 512, 301);
s += '<defs><linearGradient id="btn" x1="0" x2="0" y1="0" y2="1"><stop offset="0" stop-color="#e2e2e2"/><stop offset="1" stop-color="#bcbcbc"/></linearGradient></defs>';
for (let i = 0; i <= 6; i++) {
  const y = 454.5 - Math.round(i * 24.17);
  s += `<path class="grid" d="M1412 ${y}H1788"/>` + num(1401, y + 4, i * 50000, 'axis', 'end');
}
sales.forEach(([a, b, v], i) => {
  const c = 1431.3 + i * 37.6, h = v * 145 / 300000;
  s += `<rect class="series" x="${Math.round(c - 6)}" y="${454 - h}" width="12" height="${h}"/>` + num(c, 444.5 - h, v, 'val') +
    T(c, 472.5, a, 'cat', 'middle', catW[i][0]) + T(c, 487, b, 'cat', 'middle', catW[i][1]);
});
s += T(1608, 287, 'Total', 'title', 'middle', 38) + '<rect class="series" x="1810" y="395" width="7" height="7"/>' + T(1820, 402, 'Total', 'axis', 'start', 26);
s += sumBtn(1363, 238, 90) + fieldBtn(1363, 501, 81, 'اسم العميل', 54) + '<path d="M1363.500 238v19M1363.500 501v19" stroke="#222"/></svg>';
add(s);

// Pie chart
const reps = [['احمد', 184425, 1018, 659, 18], ['السيد', 177756, 1057, 692.5, 19], ['اماني', 253520, 1076.5, 742, 22], ['ايمن', 196853, 1058.5, 794.5, 18], ['حسني', 147500, 1023, 827.5, 25], ['زياد', 170890, 979, 833.5, 17], ['فرح', 161425, 938, 808.5, 18], ['محمد', 155540, 915, 770.5, 22], ['مروان', 278820, 913, 723.5, 27], ['مني', 259800, 957, 664.5, 17]];
const shades = [['#6ba6dd', '#4a92d6'], ['#f58a48', '#f0701c'], ['#adadad', '#939393'], ['#ffcb28', '#fbbc00'], ['#4c7bd0', '#3562c4'], ['#78b750', '#5ea233'], ['#2a67a0', '#165289'], ['#ac5626', '#9a3e00'], ['#6d6d6d', '#525252'], ['#a67d18', '#946b00']];
const total = reps.reduce((n, r) => n + r[1], 0);
const pt = a => `${(993 + 109 * Math.sin(a)).toFixed(2)} ${(739.5 - 109 * Math.cos(a)).toFixed(2)}`;
s = open(738, 529, 583, 353) + '<defs><filter id="sh" x="-10%" y="-10%" width="120%" height="120%"><feDropShadow dx="0" dy="1.500" stdDeviation="2" flood-opacity=".45"/></filter>' +
  shades.map(([a, b], i) => `<linearGradient id="p${i}" x1="0" x2="0" y1="0" y2="1"><stop offset="0" stop-color="${a}"/><stop offset="1" stop-color="${b}"/></linearGradient>`).join('') + '</defs><g filter="url(#sh)">';
let ang = 0;
reps.forEach((r, i) => {
  const next = ang + r[1] / total * 2 * Math.PI;
  s += `<path fill="url(#p${i})" d="M993 739.500L${pt(ang)}A109 109 0 0 1 ${pt(next)}z"/>`;
  ang = next;
});
s += '</g>';
reps.forEach((r, i) => {
  const y = 658.3 + i * 21.45;
  s += num(r[2], r[3], r[1], 'val') + `<rect x="1254" y="${Math.round(y - 3)}" width="7" height="7" fill="url(#p${i})"/>` + T(1265, y + 2, r[0], 'cat', 'start', r[4]);
});
s += T(1028.5, 590, 'Total', 'title b', 'middle', 45) + sumBtn(749, 537, 89) + fieldBtn(1241, 628, 61, 'المندوب', 36) + '</svg>';
add(s);

// Bar chart
const areas = [['مطروح', 196853, 32], ['كفر الشيخ', 170890, 41], ['طنطا', 278820, 22], ['بور سعيد', 259800, 38], ['الوادي الجديد', 161425, 53], ['القاهره', 253520, 28], ['السويس', 184425, 32], ['الجيزه', 177756, 26], ['الاسماعليه', 155540, 43], ['الاسكندريه', 147500, 44]];
s = open(1323, 532, 542, 349);
for (let i = 0; i <= 6; i++) {
  const x = 1467.5 + Math.round(i * 50.15);
  s += `<path class="grid" d="M${x} 612V848"/>` + num(x, 867, i * 50000, 'axis');
}
areas.forEach(([n, v, w], i) => {
  const y = 624 + i * 23.52, len = v * 300.9 / 300000;
  s += `<rect class="series" x="1468" y="${Math.round(y - 4)}" width="${len}" height="8"/>` + num(1475.5 + len, y + 4, v, 'val', 'start') + T(1455.5, y + 2, n, 'cat', 'end', w);
});
s += T(1628, 589, 'Total', 'title', 'middle', 38) + '<rect class="series" x="1810" y="735" width="7" height="7"/>' + T(1820, 742, 'Total', 'axis', 'start', 26);
s += sumBtn(1334, 540, 89) + fieldBtn(1332, 710, 60, 'المنطقه', 35) + '</svg>';
add(s);
```
